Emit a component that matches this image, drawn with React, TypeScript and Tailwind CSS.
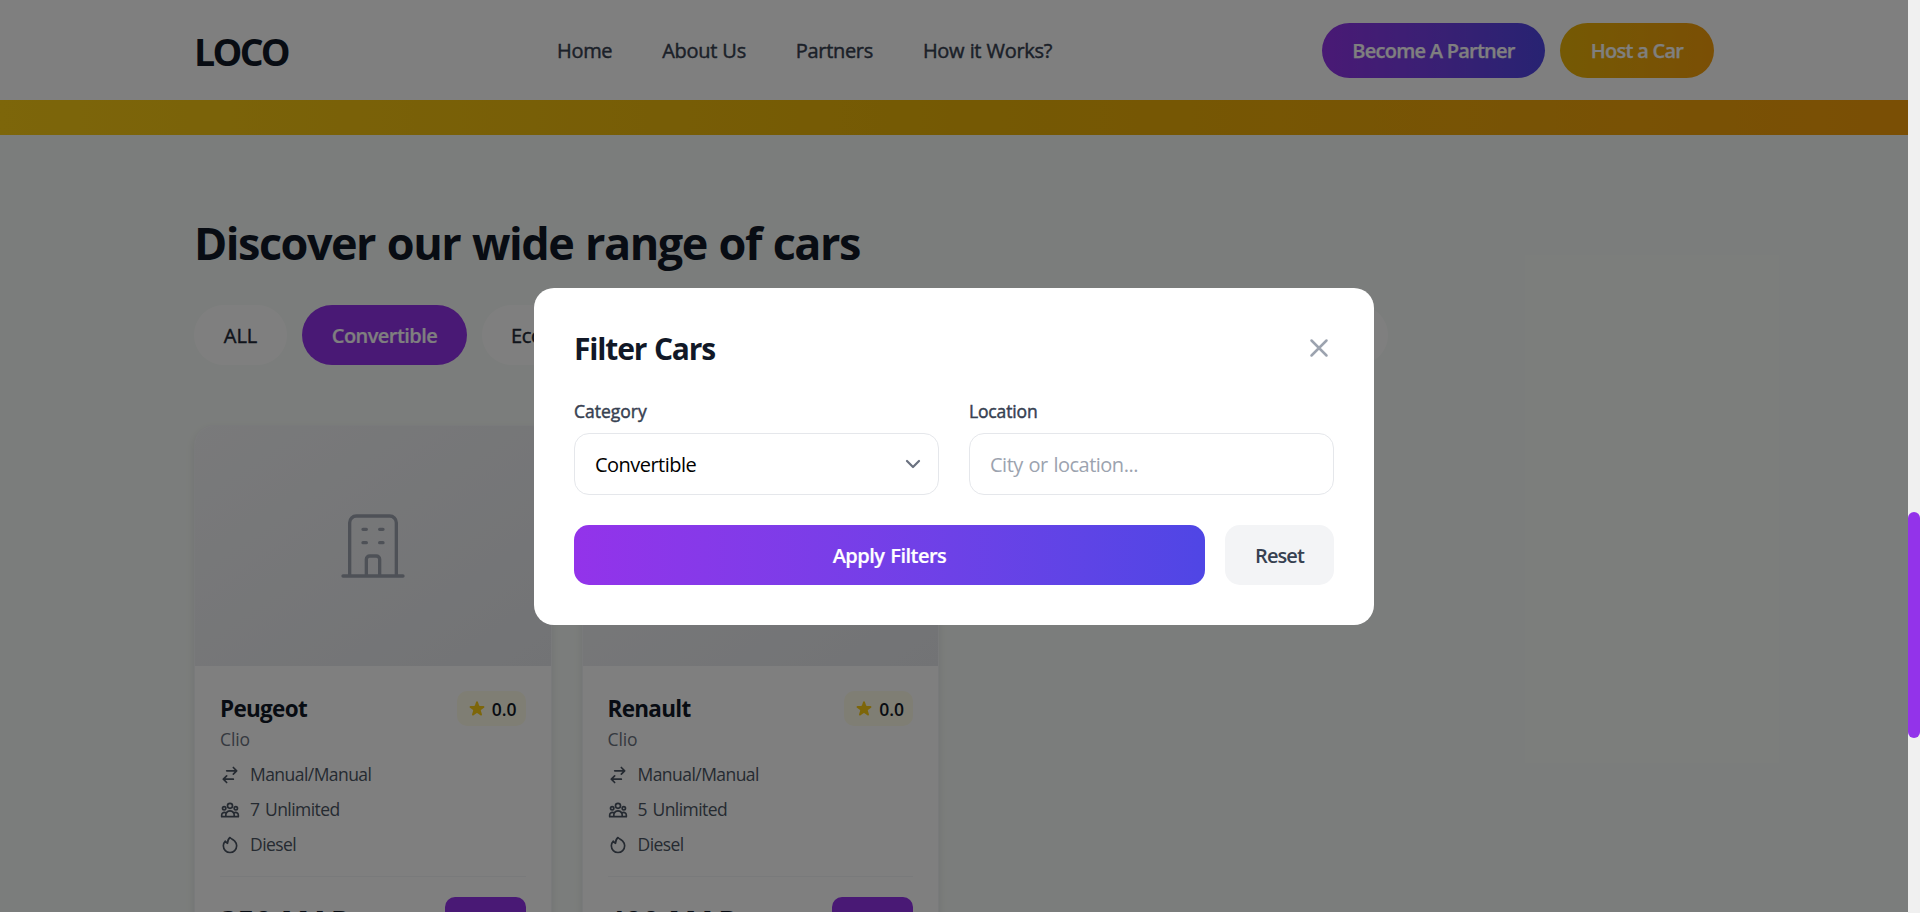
import React from "react";

const navItems = ["Home", "About Us", "Partners", "How it Works?"];

const cars = [
  { name: "Peugeot", model: "Clio", seats: "7 Unlimited", price: "350 MAD" },
  { name: "Renault", model: "Clio", seats: "5 Unlimited", price: "400 MAD" },
];

const paths = {
  building:
    "M19 21V5a2 2 0 00-2-2H7a2 2 0 00-2 2v16m14 0h2m-2 0h-5m-9 0H3m2 0h5M9 7h1m-1 4h1m4-4h1m-1 4h1m-5 10v-5a1 1 0 011-1h2a1 1 0 011 1v5m-4 0h4",
  swap: "M8 7h12m0 0l-4-4m4 4l-4 4m0 6H4m0 0l4 4m-4-4l4-4",
  users:
    "M17 20h5v-2a3 3 0 00-5.356-1.857M17 20H7m10 0v-2c0-.656-.126-1.283-.356-1.857M7 20H2v-2a3 3 0 015.356-1.857M7 20v-2c0-.656.126-1.283.356-1.857m0 0a5.002 5.002 0 019.288 0M15 7a3 3 0 11-6 0 3 3 0 016 0zm6 3a2 2 0 11-4 0 2 2 0 014 0zM7 10a2 2 0 11-4 0 2 2 0 014 0z",
  fire: "M17.657 18.657A8 8 0 016.343 7.343S7 9 9 10c0-2 .5-5 2.986-7C14 5 16.09 5.777 17.656 7.343A7.975 7.975 0 0120 13a7.975 7.975 0 01-2.343 5.657z",
  close: "M6 18L18 6M6 6l12 12",
};

function Icon({ d, className, stroke = 2 }: { d: string; className: string; stroke?: number }) {
  return (
    <svg className={className} viewBox="0 0 24 24" fill="none" stroke="currentColor" strokeWidth={stroke} strokeLinecap="round" strokeLinejoin="round">
      <path d={d} />
    </svg>
  );
}

function Spec({ d, label }: { d: string; label: string }) {
  return (
    <div className="flex items-center gap-2.5 text-[17.5px] leading-[25px] tracking-[-0.55px] text-[#4b5563] [word-spacing:1.5px]">
      <Icon d={d} className="size-5 shrink-0" />
      <span>{label}</span>
    </div>
  );
}

function CarCard({ car }: { car: (typeof cars)[number] }) {
  return (
    <article className="overflow-hidden rounded-[20px] border border-[#f3f4f6] bg-white shadow-[0_4px_10px_rgba(0,0,0,0.09)]">
      <div className="flex h-60 items-center justify-center bg-linear-to-br from-[#f3f4f6] to-[#e5e7eb] text-[#9ca3af]">
        <Icon d={paths.building} className="size-20" stroke={1} />
      </div>
      <div className="p-[25px]">
        <div className="flex items-start justify-between">
          <div>
            <h3 className="text-[22.5px] leading-[35px] font-bold tracking-[-0.7px] text-[#111827]">{car.name}</h3>
            <p className="mt-px text-[17.5px] leading-[25px] tracking-[-0.1px] text-[#6b7280]">{car.model}</p>
          </div>
          <div className="flex h-[35px] items-center gap-[5px] rounded-[10px] bg-[#fefce8] pr-[9px] pl-2.5">
            <svg className="size-5 text-[#facc15]" viewBox="0 0 20 20" fill="currentColor">
              <path d="M9.049 2.927c.3-.921 1.603-.921 1.902 0l1.07 3.292a1 1 0 00.95.69h3.462c.969 0 1.371 1.24.588 1.81l-2.8 2.034a1 1 0 00-.364 1.118l1.07 3.292c.3.921-.755 1.688-1.54 1.118l-2.8-2.034a1 1 0 00-1.175 0l-2.8 2.034c-.784.57-1.838-.197-1.539-1.118l1.07-3.292a1 1 0 00-.364-1.118L2.98 8.72c-.783-.57-.38-1.81.588-1.81h3.461a1 1 0 00.951-.69l1.07-3.292z" />
            </svg>
            <span className="pt-0.5 text-[17.5px] leading-[25px] font-semibold text-[#111827]">0.0</span>
          </div>
        </div>
        <div className="mt-2.5 flex flex-col gap-2.5">
          <Spec d={paths.swap} label="Manual/Manual" />
          <Spec d={paths.users} label={car.seats} />
          <Spec d={paths.fire} label="Diesel" />
        </div>
        <div className="mt-[19px] flex items-center justify-between border-t border-[#f3f4f6] pt-5">
          <span className="text-[30px] leading-10 font-bold tracking-[0.4px] text-[#111827]">{car.price}</span>
          <button className="h-[50px] w-[81px] rounded-[10px] bg-[#9333ea] text-[17.5px] font-semibold text-white">Book</button>
        </div>
      </div>
    </article>
  );
}

function Page() {
  return (
    <div className="flex h-[913px] flex-col overflow-hidden bg-[#f7fbf8]">
      <header className="h-[100px] shrink-0 bg-white">
        <div className="mx-auto flex h-full w-[1520px] items-center justify-between">
          <span className="w-[95px] pt-0.5 text-[37.5px] leading-[45px] font-bold tracking-[-2.7px] text-[#111827]">LOCO</span>
          <nav className="-ml-0.5 flex gap-[50px] pt-0.5 text-xl leading-[30px] font-medium tracking-[-0.32px] text-[#374151] [-webkit-text-stroke:0.45px] [word-spacing:0.5px]">
            {navItems.map((n) => (
              <a key={n}>{n}</a>
            ))}
          </nav>
          <div className="flex gap-[15px] text-xl font-semibold tracking-[-0.75px] text-white [-webkit-text-stroke:0.25px] [word-spacing:0.5px]">
            <button className="h-[55px] w-[223px] rounded-full bg-linear-to-r from-[#9333ea] to-[#4f46e5] pt-0.5">Become A Partner</button>
            <button className="h-[55px] w-[154px] rounded-full bg-linear-to-r from-[#eab308] to-[#f59e0b] pt-0.5">Host a Car</button>
          </div>
        </div>
      </header>
      <div className="h-[35px] shrink-0 bg-linear-to-r from-[#facc15] via-[#eab308] to-[#f59e0b]" />
      <main className="mx-auto w-[1520px] pt-20">
        <h2 className="text-[45px] leading-[56px] font-bold tracking-[-1.5px] text-[#111827] [word-spacing:1.6px]">Discover our wide range of cars</h2>
        <div className="mt-[34px] flex gap-[15px] text-xl text-[#1f2937]">
          <button className="h-[60px] w-[93px] rounded-full bg-white pt-0.5 font-medium [-webkit-text-stroke:0.45px]">ALL</button>
          <button className="h-[60px] w-[165px] rounded-full bg-[#9333ea] pt-0.5 font-semibold tracking-[-0.55px] text-white [-webkit-text-stroke:0.2px]">Convertible</button>
          <button className="h-[60px] w-[147px] rounded-full bg-white pt-0.5 pl-[29px] text-left font-medium tracking-[-0.4px] [-webkit-text-stroke:0.45px]">Economy</button>
          <button className="h-[60px] w-[128px] rounded-full bg-white pt-0.5 font-medium">Luxury</button>
          <button className="h-[60px] w-[116px] rounded-full bg-white pt-0.5 font-medium">Sedan</button>
          <button className="h-[60px] w-[94px] rounded-full bg-white pt-0.5 font-medium">SUV</button>
          <button className="h-[60px] w-[127px] rounded-full bg-white pt-0.5 font-medium">Sports</button>
          <button className="h-[60px] w-[219px] rounded-full bg-white pt-0.5 font-medium">More Filters</button>
        </div>
        <div className="mt-[60px] grid grid-cols-4 gap-[30px]">
          {cars.map((c) => (
            <CarCard key={c.name} car={c} />
          ))}
        </div>
      </main>
    </div>
  );
}

function FilterDialog() {
  return (
    <div role="dialog" className="w-[840px] rounded-[20px] bg-white p-10">
      <div className="mb-[30px] flex h-10 items-center justify-between">
        <h2 className="pt-0.5 text-[30px] leading-10 font-bold tracking-[-1.15px] text-[#111827] [word-spacing:1px]">Filter Cars</h2>
        <Icon d={paths.close} className="size-[30px] text-[#9ca3af]" />
      </div>
      <div className="grid grid-cols-2 gap-[30px]">
        <div>
          <div className="mb-[9px] pt-px text-[17.5px] leading-[25px] font-medium text-[#374151] [-webkit-text-stroke:0.45px]">Category</div>
          <div className="flex h-[62px] items-center justify-between rounded-[15px] border border-[#e5e7eb] pr-2.5 pl-5 text-xl tracking-[-0.53px] text-black">
            <span className="pt-0.5">Convertible</span>
            <svg className="size-[30px] text-[#6b7280]" viewBox="0 0 20 20" fill="none" stroke="currentColor" strokeWidth="1.5" strokeLinecap="round" strokeLinejoin="round">
              <path d="M6 8l4 4 4-4" />
            </svg>
          </div>
        </div>
        <div>
          <div className="mb-[9px] pt-px text-[17.5px] leading-[25px] font-medium tracking-[-0.15px] text-[#374151] [-webkit-text-stroke:0.45px]">Location</div>
          <div className="flex h-[62px] items-center rounded-[15px] border border-[#e5e7eb] px-5 pt-0.5 text-xl tracking-[-0.5px] text-[#9ca3af] [word-spacing:1px]">City or location...</div>
        </div>
      </div>
      <div className="mt-[30px] flex gap-5 text-xl">
        <button className="h-[60px] flex-1 rounded-[15px] bg-linear-to-r from-[#9333ea] to-[#4f46e5] pt-0.5 font-semibold tracking-[-0.5px] text-white [-webkit-text-stroke:0.2px] [word-spacing:1px]">Apply Filters</button>
        <button className="h-[60px] w-[109px] rounded-[15px] bg-[#f3f4f6] pt-0.5 font-semibold tracking-[-0.9px] text-[#374151]">Reset</button>
      </div>
    </div>
  );
}

export default function App() {
  return (
    <div className="flex h-[913px] overflow-hidden bg-white font-['Open_Sans',sans-serif]">
      <div className="relative h-[912px] w-[1908px] shrink-0 overflow-hidden">
        <Page />
        <div className="absolute inset-0 flex items-center justify-center bg-black/50">
          <FilterDialog />
        </div>
      </div>
      <div className="w-3 bg-[#f0f0f0] pt-[512px]">
        <div className="h-[226px] rounded-full bg-[#9333ea]" />
      </div>
    </div>
  );
}
